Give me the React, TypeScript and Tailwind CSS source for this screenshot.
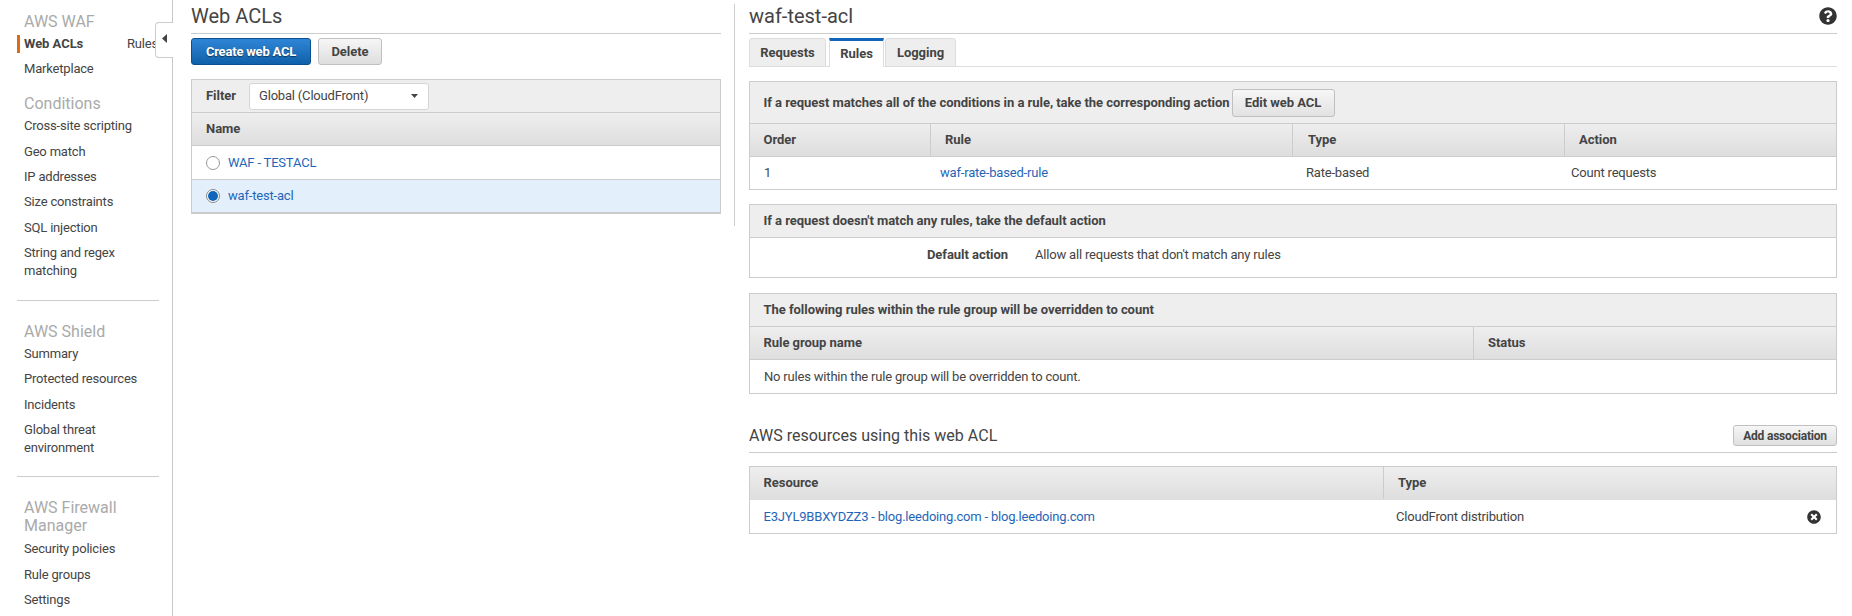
import { FaQuestionCircle, FaTimesCircle } from 'react-icons/fa'

const link = 'text-[#1f66b8]'
const bold = 'font-bold tracking-[-0.04px]'
const headCell = `flex items-center ${bold}`
const gradient = 'bg-gradient-to-b from-[#eeeeee] to-[#dedede]'

function NavItem({ label }: { label: string }) {
  return <div className="py-[3.65px] leading-[18px]">{label}</div>
}

function NavHeading({ label }: { label: string }) {
  return <div className="mb-[1.5px] w-[125px] text-[16px] leading-[18px] tracking-normal text-[#aaaaaa]">{label}</div>
}

function Sidebar() {
  return (
    <aside className="relative h-full w-[173px] shrink-0 border-r border-[#c8c8c8] pl-6 pt-[13px]">
      <NavHeading label="AWS WAF" />
      <div className="flex items-center pb-[3.5px] pt-[2.5px] leading-[18px]">
        <span className="-ml-[7px] w-[110px] shrink-0">
          <span className={`inline-block border-l-[3px] border-[#dd6b10] pl-1 ${bold}`}>Web ACLs</span>
        </span>
        <span>Rules</span>
      </div>
      <NavItem label="Marketplace" />
      <div className="-mb-[0.5px] mt-[13px]">
        <NavHeading label="Conditions" />
      </div>
      <NavItem label="Cross-site scripting" />
      <NavItem label="Geo match" />
      <NavItem label="IP addresses" />
      <NavItem label="Size constraints" />
      <NavItem label="SQL injection" />
      <div className="w-[110px]">
        <NavItem label="String and regex matching" />
      </div>
      <hr className="-ml-[7px] mt-[17px] mr-[13px] border-[#cccccc]" />
      <div className="-mb-[1.5px] mt-[22px]">
        <NavHeading label="AWS Shield" />
      </div>
      <NavItem label="Summary" />
      <NavItem label="Protected resources" />
      <NavItem label="Incidents" />
      <div className="w-[110px]">
        <NavItem label="Global threat environment" />
      </div>
      <hr className="-ml-[7px] mt-[15.500px] mr-[13px] border-[#cccccc]" />
      <div className="mt-[22px]">
        <NavHeading label="AWS Firewall Manager" />
      </div>
      <div className="mt-[0.5px]">
        <NavItem label="Security policies" />
        <NavItem label="Rule groups" />
        <NavItem label="Settings" />
      </div>
      <div className="absolute left-[155px] top-[22px] flex h-[36px] w-[18px] items-center justify-center rounded-l-[4px] border border-r-0 border-[#cccccc] bg-white pb-[4px]">
        <svg width="5" height="9" viewBox="0 0 5 9">
          <path d="M5 0v9L0 4.5z" fill="#444444" />
        </svg>
      </div>
    </aside>
  )
}

function WebAclList() {
  return (
    <section className="h-[222px] w-[562px] shrink-0 border-r border-[#cccccc] pl-[18px] pr-[13px]">
      <h1 className="h-[30px] border-b border-[#cccccc] text-[20px] font-normal leading-[24px] tracking-normal">Web ACLs</h1>
      <div className="mt-1 flex gap-[7px]">
        <button className="h-[27px] w-[120px] rounded-[3px] border border-[#0c4f8f] bg-gradient-to-b from-[#2f86d6] to-[#0e60aa] font-bold tracking-[-0.2px] text-white [text-shadow:0_1px_1px_rgba(0,0,0,0.5)]">
          Create web ACL
        </button>
        <button className={`h-[27px] w-[64px] rounded-[3px] border border-[#c0c0c0] bg-gradient-to-b from-[#f6f6f6] to-[#dedede] ${bold}`}>
          Delete
        </button>
      </div>
      <div className="mt-[14px] border border-b-[2px] border-[#cccccc]">
        <div className="flex h-[33px] items-center border-b border-[#cccccc] bg-[#eeeeee] pl-[14px]">
          <span className={`w-[43px] ${bold}`}>Filter</span>
          <div className="flex h-[27px] w-[180px] items-center justify-between rounded-[3px] border border-[#d5d5d5] bg-white pl-[9px] pr-[10px]">
            <span>Global (CloudFront)</span>
            <svg width="7" height="4" viewBox="0 0 7 4">
              <path d="M0 0h7L3.500 4z" fill="#444444" />
            </svg>
          </div>
        </div>
        <div className={`${gradient} ${headCell} h-[33px] border-b border-[#cccccc] pl-[14px]`}>Name</div>
        <div className="flex h-[34px] items-center gap-2 border-b border-[#cccccc] pl-[14px]">
          <span className="size-[14px] rounded-full border border-[#999999] bg-white" />
          <span className={link}>WAF - TESTACL</span>
        </div>
        <div className="flex h-[32px] items-center gap-2 bg-[#e3f0fb] pl-[14px]">
          <span className="flex size-[14px] items-center justify-center rounded-full border border-[#888888] bg-white">
            <span className="size-[10px] rounded-full bg-[#1166bb]" />
          </span>
          <span className={link}>waf-test-acl</span>
        </div>
      </div>
    </section>
  )
}

function Tabs() {
  const tab = `flex h-[29px] items-center justify-center ${bold}`
  return (
    <div className="mt-1 flex h-[29px] border-b border-[#dddddd]">
      <div className={`${tab} w-[77px] rounded-t-[3px] border border-[#dddddd] bg-[#eeeeee]`}>Requests</div>
      <div className={`${tab} ml-[3px] w-[55px] border-x border-t-[3px] border-x-[#dddddd] border-t-[#1166bb] bg-white`}>Rules</div>
      <div className={`${tab} ml-px w-[71px] rounded-t-[3px] border border-[#dddddd] bg-[#eeeeee]`}>Logging</div>
    </div>
  )
}

function RulesTab() {
  return (
    <>
      <div className="mt-[14px] border border-[#cccccc]">
        <div className="flex h-[42px] items-center border-b border-[#cccccc] bg-[#eeeeee] pl-[13.500px]">
          <span className={bold}>If a request matches all of the conditions in a rule, take the corresponding action</span>
          <button className={`ml-[2px] h-[28px] w-[103px] rounded-[3px] border border-[#c0c0c0] bg-gradient-to-b from-[#f6f6f6] to-[#e2e2e2] ${bold}`}>
            Edit web ACL
          </button>
        </div>
        <div className={`${gradient} grid h-[33px] grid-cols-[180px_362px_272px_1fr] border-b border-[#cccccc]`}>
          <div className={`${headCell} pl-[13.500px]`}>Order</div>
          <div className={`${headCell} border-l border-[#cccccc] pl-[14px]`}>Rule</div>
          <div className={`${headCell} border-l border-[#cccccc] pl-[15px]`}>Type</div>
          <div className={`${headCell} border-l border-[#cccccc] pl-[14px]`}>Action</div>
        </div>
        <div className="grid h-[32px] grid-cols-[180px_362px_272px_1fr] items-center">
          <div className="pl-[14px]">1</div>
          <div className={`${link} pl-[10px]`}>waf-rate-based-rule</div>
          <div className="pl-[14px]">Rate-based</div>
          <div className="pl-[7px]">Count requests</div>
        </div>
      </div>

      <div className="mt-[14px] h-[74px] border border-[#cccccc]">
        <div className={`flex h-[33px] items-center border-b border-[#cccccc] bg-[#eeeeee] pl-[13.500px] ${bold}`}>
          If a request doesn't match any rules, take the default action
        </div>
        <div className="flex h-[33px] items-center">
          <div className={`w-[258px] text-right ${bold}`}>Default action</div>
          <div className="ml-[27px]">Allow all requests that don't match any rules</div>
        </div>
      </div>

      <div className="mt-[15px] border border-[#cccccc]">
        <div className={`flex h-[33px] items-center border-b border-[#cccccc] bg-[#eeeeee] pl-[13.500px] ${bold}`}>
          The following rules within the rule group will be overridden to count
        </div>
        <div className={`${gradient} grid h-[33px] grid-cols-[723px_1fr] border-b border-[#cccccc]`}>
          <div className={`${headCell} pl-[13.500px]`}>Rule group name</div>
          <div className={`${headCell} border-l border-[#cccccc] pl-[14px]`}>Status</div>
        </div>
        <div className="flex h-[33px] items-center pl-[14px]">No rules within the rule group will be overridden to count.</div>
      </div>

      <div className="mt-[31px] flex items-center justify-between border-b border-[#cccccc] pb-[6px]">
        <h2 className="text-[16px] font-normal leading-[21px] tracking-[0.02px]">AWS resources using this web ACL</h2>
        <button className="h-[21px] w-[104px] rounded-[3px] border border-[#c0c0c0] bg-gradient-to-b from-[#f6f6f6] to-[#e0e0e0] text-[12px] font-bold tracking-[-0.2px]">
          Add association
        </button>
      </div>

      <div className="mt-[13px] border border-[#cccccc]">
        <div className={`${gradient} grid h-[33px] grid-cols-[633px_1fr] pb-px`}>
          <div className={`${headCell} pl-[13.500px]`}>Resource</div>
          <div className={`${headCell} border-l border-[#cccccc] pl-[14px]`}>Type</div>
        </div>
        <div className="grid h-[33px] grid-cols-[633px_1fr] items-center">
          <div className={`${link} pl-[13.500px]`}>E3JYL9BBXYDZZ3 - blog.leedoing.com - blog.leedoing.com</div>
          <div className="flex items-center justify-between pl-[13px] pr-[15px]">
            <span>CloudFront distribution</span>
            <FaTimesCircle size={14} color="#333333" />
          </div>
        </div>
      </div>
    </>
  )
}

export default function App() {
  return (
    <div className="flex h-[616px] w-[1852px] overflow-hidden bg-white text-[13px] tracking-[-0.19px] text-[#444444] [font-family:Roboto,sans-serif]">
      <Sidebar />
      <main className="flex flex-1 items-start pt-1">
        <WebAclList />
        <section className="ml-[14px] w-[1088px]">
          <div className="flex h-[30px] items-start justify-between border-b border-[#cccccc]">
            <h1 className="text-[20px] font-normal leading-[24px] tracking-normal">waf-test-acl</h1>
            <FaQuestionCircle size={18} color="#333333" className="mt-[3px]" />
          </div>
          <Tabs />
          <RulesTab />
        </section>
      </main>
    </div>
  )
}
